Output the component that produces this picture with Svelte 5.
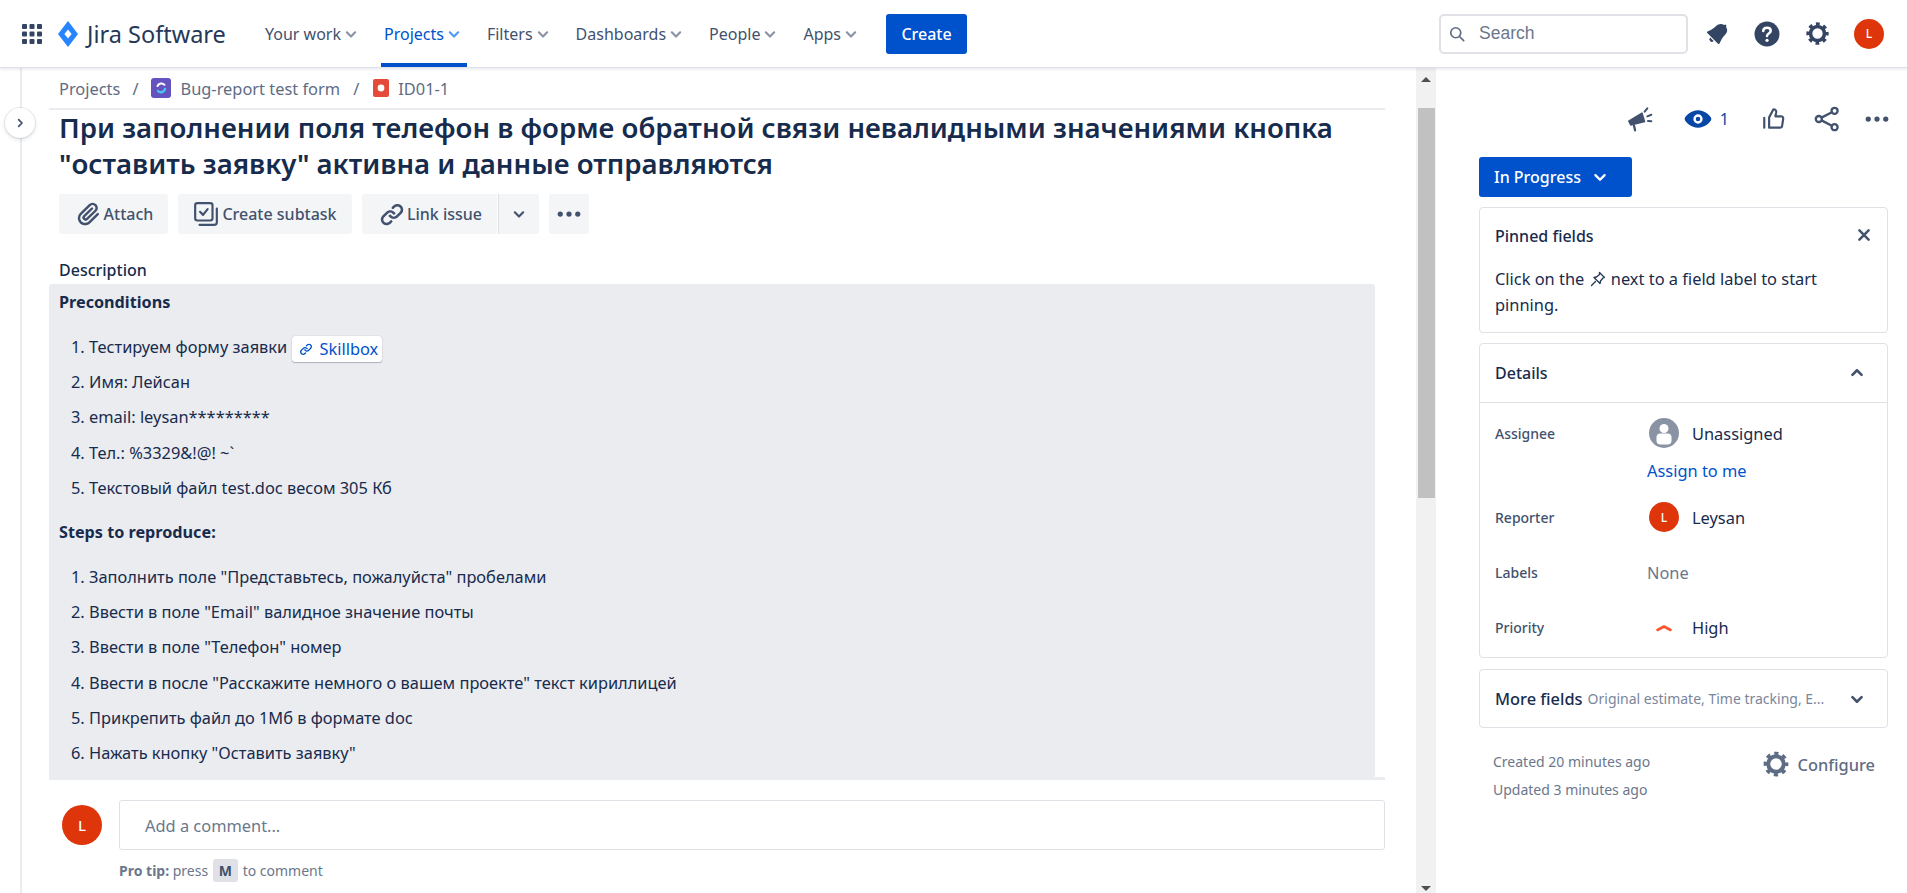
<script>
  // top navigation and description content
  const navItems = ["Your work", "Projects", "Filters", "Dashboards", "People", "Apps"];
  const preconditions = [
    "Имя: Лейсан",
    "email: leysan*********",
    "Тел.: %3329&!@! ~`",
    "Текстовый файл test.doc весом  305 Кб"
  ];
  const steps = [
    'Заполнить поле "Представьтесь, пожалуйста" пробелами',
    'Ввести в поле "Email" валидное значение почты',
    'Ввести в поле "Телефон" номер',
    'Ввести в после "Расскажите немного о вашем проекте" текст кириллицей',
    "Прикрепить файл до 1Мб в формате doc",
    'Нажать кнопку "Оставить заявку"'
  ];
</script>

{#snippet chevron(size)}
  <svg class="chev" width={size} height={size} viewBox="0 0 24 24"><path d="M7 10l5 5 5-5" fill="none" stroke="currentColor" stroke-width="2.6" stroke-linecap="round" stroke-linejoin="round" /></svg>
{/snippet}

{#snippet dots()}
  <svg width="30" height="30" viewBox="0 0 24 24" fill="currentColor"><circle cx="5" cy="12" r="2.1" /><circle cx="12" cy="12" r="2.1" /><circle cx="19" cy="12" r="2.1" /></svg>
{/snippet}

{#snippet gear(size)}
  <svg width={size} height={size} viewBox="0 0 24 24" fill="none" stroke="currentColor">
    <circle cx="12" cy="12" r="6.2" stroke-width="3.2" />
    <circle cx="12" cy="12" r="8.4" stroke-width="3" stroke-dasharray="3.3 3.3" stroke-dashoffset="1.65" />
  </svg>
{/snippet}

<div class="page">
  <header class="topbar">
    <svg class="apps" width="20" height="20" viewBox="0 0 20 20" fill="#344563">
      {#each [0, 7.5, 15] as y}
        {#each [0, 7.5, 15] as x}
          <rect x={x} y={y} width="5" height="5" rx="1" />
        {/each}
      {/each}
    </svg>
    <div class="brand">
      <svg width="20" height="26" viewBox="0 0 20 26">
        <path d="M10 0l10 13-10 13L0 13z" fill="#2684ff" />
        <path d="M10 8.5l3.6 4.5-3.6 4.5L6.4 13z" fill="#fff" />
      </svg>
      <span>Jira Software</span>
    </div>
    <nav class="nav">
      {#each navItems as item}
        <div class="nav-item" class:active={item === "Projects"}>
          {item}{@render chevron(20)}
        </div>
      {/each}
    </nav>
    <button class="create">Create</button>
    <div class="search">
      <svg width="20" height="20" viewBox="0 0 24 24" fill="none" stroke="#5e6c84" stroke-width="2"><circle cx="10.5" cy="10.5" r="6" /><path d="M15 15l5 5" stroke-linecap="round" /></svg>
      <span>Search</span>
    </div>
    <div class="top-icons">
      <svg width="30" height="30" viewBox="0 0 24 24" fill="#344563"><path d="M6.485 17.669a2 2 0 002.829 0l-2.829-2.83a2 2 0 000 2.83zm4.897-12.191l-.725.725c-.782.782-2.21 1.813-3.206 2.311l-3.017 1.509c-.495.248-.584.774-.187 1.171l8.556 8.556c.398.396.922.313 1.171-.188l1.51-3.016c.494-.988 1.526-2.42 2.311-3.206l.725-.726a5.048 5.048 0 00.64-6.356 1.01 1.01 0 10-1.354-1.494c-.023.025-.046.049-.066.075a5.043 5.043 0 00-2.788-.84 5.036 5.036 0 00-3.57 1.479z" /></svg>
      <svg width="30" height="30" viewBox="0 0 24 24"><circle cx="12" cy="12" r="10" fill="#344563" /><path d="M9 9.6c0-1.7 1.3-2.7 3-2.7s3 1 3 2.5c0 2.2-3 2.2-3 4.2" fill="none" stroke="#fff" stroke-width="2" stroke-linecap="round" /><circle cx="12" cy="17" r="1.3" fill="#fff" /></svg>
      <span class="gear-top">{@render gear(27)}</span>
      <div class="avatar small">L</div>
    </div>
  </header>

  <div class="body">
    <aside class="rail">
      <button class="rail-toggle" aria-label="Expand">
        <svg width="16" height="16" viewBox="0 0 24 24"><path d="M10 7l5 5-5 5" fill="none" stroke="#42526e" stroke-width="2.6" stroke-linecap="round" stroke-linejoin="round" /></svg>
      </button>
    </aside>

    <main class="main">
      <div class="crumbs">
        <span>Projects</span>
        <span class="slash">/</span>
        <svg class="proj-icon" width="20" height="20" viewBox="0 0 20 20">
          <rect width="20" height="20" rx="3" fill="#6554c0" />
          <path d="M6.5 8a4.2 4.2 0 0 1 7-1.2" fill="none" stroke="#fff" stroke-width="2" stroke-linecap="round" />
          <path d="M14 11a4.2 4.2 0 0 1-7 2" fill="none" stroke="#4bc5ec" stroke-width="2.4" stroke-linecap="round" />
        </svg>
        <span>Bug-report test form</span>
        <span class="slash second">/</span>
        <svg class="bug-icon" width="16" height="18" viewBox="0 0 16 18">
          <rect width="16" height="18" rx="2" fill="#e5493a" />
          <circle cx="8" cy="9" r="3.4" fill="#fff" />
        </svg>
        <span>ID01-1</span>
      </div>

      <h1 class="title">При заполнении поля телефон в форме обратной связи невалидными значениями кнопка "оставить заявку" активна и данные отправляются</h1>

      <div class="actions">
        <button class="act attach">
          <svg width="30" height="30" viewBox="0 0 24 24" fill="#42526e"><path d="M11.643 17.965c-1.53 1.495-4.016 1.496-5.542.004a3.773 3.773 0 01.002-5.412l7.147-6.985a2.316 2.316 0 013.233-.003c.893.873.895 2.282.004 3.153l-6.703 6.55a.653.653 0 01-.914-.008.62.62 0 010-.902l6.229-6.087a.941.941 0 000-1.353.995.995 0 00-1.384 0l-6.23 6.087a2.502 2.502 0 000 3.607 2.643 2.643 0 003.683.009l6.703-6.55a4.074 4.074 0 00-.004-5.859 4.306 4.306 0 00-6.002.003l-7.148 6.985a5.655 5.655 0 00-.001 8.118c2.29 2.239 6.015 2.238 8.31-.005l6.686-6.533a.941.941 0 000-1.353.995.995 0 00-1.384 0l-6.686 6.534z" /></svg>
          Attach
        </button>
        <button class="act subtask">
          <svg width="26" height="26" viewBox="0 0 24 24" fill="none" stroke="#42526e" stroke-width="2" stroke-linecap="round" stroke-linejoin="round"><rect x="2" y="2" width="16" height="16" rx="2" /><path d="M6.500 10l2.800 2.800 4.200-5.300" /><path d="M22 7v12.500a2.500 2.500 0 0 1-2.500 2.500H6" /></svg>
          Create subtask
        </button>
        <div class="split">
          <button class="act link">
            <svg width="30" height="30" viewBox="0 0 24 24" fill="#42526e"><path d="M12.856 5.457l-.937.92a1.002 1.002 0 000 1.437 1.047 1.047 0 001.463 0l.984-.966c.967-.95 2.542-1.135 3.602-.288a2.54 2.54 0 01.203 3.81l-2.903 2.852a2.646 2.646 0 01-3.696 0l-1.11-1.09L9 13.57l1.108 1.089c1.822 1.788 4.802 1.788 6.622 0l2.905-2.852a4.558 4.558 0 00-.357-6.82c-1.893-1.517-4.695-1.226-6.422.47" /><path d="M11.144 19.543l.937-.92a1.002 1.002 0 000-1.437 1.047 1.047 0 00-1.462 0l-.985.966c-.967.95-2.542 1.135-3.602.288a2.54 2.54 0 01-.203-3.81l2.903-2.852a2.646 2.646 0 013.696 0l1.11 1.09L15 11.43l-1.108-1.089c-1.822-1.788-4.802-1.788-6.622 0l-2.905 2.852a4.558 4.558 0 00.357 6.82c1.893 1.517 4.695 1.226 6.422-.47" /></svg>
            Link issue
          </button>
          <button class="act caret" aria-label="More link options">{@render chevron(20)}</button>
        </div>
        <button class="act more" aria-label="More">{@render dots()}</button>
      </div>

      <div class="desc-label">Description</div>
      <div class="desc-wrap">
        <div class="desc">
          <div class="desc-head">Preconditions</div>
          <ol>
            <li>Тестируем форму заявки <span class="smart">
              <svg width="16" height="16" viewBox="0 0 24 24" fill="#0052cc"><path d="M12.856 5.457l-.937.92a1.002 1.002 0 000 1.437 1.047 1.047 0 001.463 0l.984-.966c.967-.95 2.542-1.135 3.602-.288a2.54 2.54 0 01.203 3.81l-2.903 2.852a2.646 2.646 0 01-3.696 0l-1.11-1.09L9 13.57l1.108 1.089c1.822 1.788 4.802 1.788 6.622 0l2.905-2.852a4.558 4.558 0 00-.357-6.82c-1.893-1.517-4.695-1.226-6.422.47" /><path d="M11.144 19.543l.937-.92a1.002 1.002 0 000-1.437 1.047 1.047 0 00-1.462 0l-.985.966c-.967.95-2.542 1.135-3.602.288a2.54 2.54 0 01-.203-3.81l2.903-2.852a2.646 2.646 0 013.696 0l1.11 1.09L15 11.43l-1.108-1.089c-1.822-1.788-4.802-1.788-6.622 0l-2.905 2.852a4.558 4.558 0 00.357 6.82c1.893 1.517 4.695 1.226 6.422-.47" /></svg>
              Skillbox</span></li>
            {#each preconditions as line}
              <li>{line}</li>
            {/each}
          </ol>
          <div class="desc-head steps">Steps to reproduce:</div>
          <ol class="steps-list">
            {#each steps as line}
              <li>{line}</li>
            {/each}
          </ol>
        </div>
      </div>

      <div class="comment">
        <div class="avatar large">L</div>
        <div class="comment-box">Add a comment...</div>
      </div>
      <div class="tip"><b>Pro tip:</b> press <kbd>M</kbd> to comment</div>
    </main>

    <div class="scrollbar">
      <span class="arrow up"></span>
      <span class="thumb"></span>
      <span class="arrow down"></span>
    </div>

    <section class="side">
      <div class="side-icons">
        <svg width="32" height="32" viewBox="0 0 24 24" fill="#42526e" stroke="#42526e"><path d="M3.500 13.500L13.500 7.500l2 6.500-10.500 2.500z" stroke-width="1" stroke-linejoin="round" /><path d="M7.500 17l.8 3.500" stroke-width="1.700" stroke-linecap="round" /><path d="M15.500 6.500l2-2.500M17.500 10l3-1.200M18 13.500l2.500.2" stroke-width="1.500" stroke-linecap="round" /></svg>
        <div class="watch">
          <svg width="32" height="32" viewBox="0 0 24 24" fill="#0747a6"><path fill-rule="evenodd" d="M12 5.500c5 0 10 4.400 10 6.500s-5 6.500-10 6.500S2 14.100 2 12s5-6.500 10-6.500zm0 3a3.500 3.500 0 100 7 3.500 3.500 0 000-7zm0 1.800a1.700 1.700 0 110 3.400 1.700 1.700 0 010-3.400z" /></svg>
          <span>1</span>
        </div>
        <svg class="like" width="26" height="26" viewBox="0 0 24 24" fill="none" stroke="#42526e" stroke-width="2" stroke-linecap="round" stroke-linejoin="round"><path d="M3 11v9" /><path d="M7.500 20V10.500l4-7.500c1.700 0 2.800 1.200 2.500 3l-.7 3.500h5.200a2 2 0 0 1 2 2.300l-1 6.500a2 2 0 0 1-2 1.700z" /></svg>
        <svg class="share" width="28" height="28" viewBox="0 0 24 24" fill="none" stroke="#42526e" stroke-width="2"><circle cx="18.500" cy="5" r="2.600" /><circle cx="18.500" cy="19" r="2.600" /><circle cx="5" cy="12" r="2.600" /><path d="M7.300 10.800l8.900-4.600M7.300 13.200l8.900 4.600" /></svg>
        <span class="side-more">{@render dots()}</span>
      </div>

      <button class="status">In Progress {@render chevron(22)}</button>

      <div class="card pinned">
        <div class="pinned-head">
          <strong>Pinned fields</strong>
          <svg width="22" height="22" viewBox="0 0 24 24" fill="none" stroke="#42526e" stroke-width="2.800" stroke-linecap="round"><path d="M7 7l10 10M17 7L7 17" /></svg>
        </div>
        <p>Click on the
          <svg class="pin" width="16" height="16" viewBox="0 0 16 16" fill="none" stroke="#253858" stroke-width="1.300" stroke-linejoin="round"><path d="M9.500 1.500l5 5-1.500.5-2.500 3-.5 2.500-6-6 2.500-.5 3-2.500z" /><path d="M5.500 10.500L1.500 14.500" stroke-linecap="round" /></svg>
          next to a field label to start pinning.</p>
      </div>

      <div class="card details">
        <div class="details-head">
          <strong>Details</strong>
          <svg class="flip" width="22" height="22" viewBox="0 0 24 24"><path d="M7 10l5 5 5-5" fill="none" stroke="#42526e" stroke-width="2.800" stroke-linecap="round" stroke-linejoin="round" /></svg>
        </div>
        <div class="rows">
          <div class="row assignee">
            <span class="label">Assignee</span>
            <div class="value">
              <svg class="icon-slot" width="30" height="30" viewBox="0 0 30 30"><circle cx="15" cy="15" r="15" fill="#8993a4" /><circle cx="15" cy="10.500" r="4.500" fill="#fff" /><rect x="7.500" y="15.500" width="15" height="11" rx="4" fill="#fff" /></svg>
              <span>Unassigned</span>
            </div>
          </div>
          <a class="assign" href="#top">Assign to me</a>
          <div class="row reporter">
            <span class="label">Reporter</span>
            <div class="value">
              <div class="avatar small icon-slot">L</div>
              <span>Leysan</span>
            </div>
          </div>
          <div class="row labels">
            <span class="label">Labels</span>
            <div class="value none">None</div>
          </div>
          <div class="row priority">
            <span class="label">Priority</span>
            <div class="value">
              <svg class="icon-slot" width="30" height="30" viewBox="0 0 30 30"><path d="M8.500 17l6.500-3.500 6.500 3.500" fill="none" stroke="#ff5630" stroke-width="2.600" stroke-linecap="round" stroke-linejoin="round" /></svg>
              <span>High</span>
            </div>
          </div>
        </div>
      </div>

      <div class="card more-fields">
        <strong>More fields</strong>
        <span class="hint">Original estimate, Time tracking, E...</span>
        <svg width="22" height="22" viewBox="0 0 24 24"><path d="M7 10l5 5 5-5" fill="none" stroke="#42526e" stroke-width="2.800" stroke-linecap="round" stroke-linejoin="round" /></svg>
      </div>

      <div class="foot">
        <div class="dates">
          <div>Created 20 minutes ago</div>
          <div>Updated 3 minutes ago</div>
        </div>
        <div class="configure">{@render gear(30)} Configure</div>
      </div>
    </section>
  </div>
</div>

<style>
  :global(body) {
    margin: 0;
    background: #fff;
  }

  .page {
    width: 1907px;
    height: 893px;
    overflow: hidden;
    display: flex;
    flex-direction: column;
    font-family: "Noto Sans", "Open Sans", sans-serif;
    font-size: 15px;
    color: #172b4d;
  }

  button {
    font-family: inherit;
    border: none;
    cursor: pointer;
  }

  .topbar {
    flex: none;
    height: 68px;
    box-sizing: border-box;
    display: flex;
    align-items: center;
    padding-left: 22px;
    border-bottom: 1px solid #dfe1e6;
    box-shadow: 0 1px 3px rgba(9, 30, 66, 0.12);
    position: relative;
    z-index: 2;
    background: #fff;
  }

  .apps {
    margin-right: 16px;
  }

  .brand {
    display: flex;
    align-items: center;
    gap: 9px;
    font-size: 23.500px;
    color: #253858;
    width: 204px;
  }

  .nav {
    display: flex;
    height: 100%;
    gap: 17px;
  }

  .nav-item {
    display: flex;
    align-items: center;
    padding: 0 3px;
    font-size: 16px;
    color: #42526e;
    box-sizing: border-box;
    border-bottom: 4px solid transparent;
    border-top: 4px solid transparent;
  }

  .nav-item :global(.chev) {
    color: #8993a4;
  }

  .nav-item.active {
    color: #0052cc;
    border-bottom-color: #0052cc;
  }

  .nav-item.active :global(.chev) {
    color: #4c9aff;
  }

  .create {
    margin-left: 22px;
    width: 81px;
    height: 40px;
    border-radius: 3px;
    background: #0052cc;
    color: #fff;
    font-size: 16px;
    font-weight: 500;
  }

  .search {
    margin-left: auto;
    width: 249px;
    height: 40px;
    box-sizing: border-box;
    border: 2px solid #dfe1e6;
    border-radius: 5px;
    display: flex;
    align-items: center;
    gap: 12.500px;
    padding-left: 5.500px;
    font-family: "Liberation Sans", sans-serif;
    font-size: 17.500px;
    color: #6b778c;
  }

  .top-icons {
    display: flex;
    align-items: center;
    gap: 20px;
    margin: 0 23px 0 14px;
    color: #344563;
  }

  .gear-top {
    display: flex;
    margin: 0 1.500px;
  }

  .top-icons .avatar {
    margin-left: 2px;
  }

  .avatar {
    border-radius: 50%;
    background: #de350b;
    color: #fff;
    display: flex;
    align-items: center;
    justify-content: center;
    font-weight: 500;
    flex: none;
  }

  .avatar.small {
    width: 30px;
    height: 30px;
    font-size: 12px;
  }

  .avatar.large {
    width: 40px;
    height: 40px;
    font-size: 15px;
  }

  .body {
    flex: 1;
    min-height: 0;
    display: flex;
  }

  .rail {
    flex: none;
    width: 22px;
    box-sizing: border-box;
    border-right: 2px solid #ebecf0;
    position: relative;
  }

  .rail-toggle {
    position: absolute;
    left: 5px;
    top: 40px;
    width: 30px;
    height: 30px;
    border-radius: 50%;
    background: #fff;
    box-shadow: 0 0 0 1px rgba(9, 30, 66, 0.08), 0 2px 4px rgba(9, 30, 66, 0.12);
    display: flex;
    align-items: center;
    justify-content: center;
    padding: 0;
    z-index: 1;
  }

  .main {
    flex: none;
    width: 1394px;
    box-sizing: border-box;
    padding: 0 31px 0 27px;
    overflow: hidden;
  }

  .crumbs {
    height: 40px;
    display: flex;
    align-items: center;
    padding-left: 10px;
    font-size: 16.400px;
    color: #5e6c84;
    border-bottom: 2px solid #ebecf0;
  }

  .slash {
    margin: 0 12px;
  }

  .slash.second {
    margin: 0 14px 0 13px;
  }

  .proj-icon {
    margin-right: 10px;
  }

  .bug-icon {
    margin-right: 9px;
  }

  .title {
    margin: -1px 0 0 10px;
    font-size: 27.600px;
    line-height: 36px;
    font-weight: 600;
    color: #172b4d;
  }

  .actions {
    display: flex;
    gap: 10px;
    margin: 13px 0 0 10px;
  }

  .act {
    height: 40px;
    display: flex;
    align-items: center;
    justify-content: center;
    gap: 4px;
    background: #f4f5f7;
    border-radius: 3px;
    font-size: 16px;
    font-weight: 500;
    color: #42526e;
    padding: 0;
  }

  .attach {
    width: 109px;
    gap: 0;
  }

  .subtask {
    width: 174px;
    gap: 3px;
  }

  .split {
    display: flex;
    gap: 1px;
  }

  .link {
    width: 135px;
    gap: 0;
    border-radius: 3px 0 0 3px;
  }

  .caret {
    width: 41px;
    border-radius: 0 3px 3px 0;
    border-left: 1px solid #dfe1e6;
  }

  .more {
    width: 40px;
  }

  .desc-label {
    margin: 25px 0 0 10px;
    height: 25px;
    line-height: 22px;
    font-size: 16px;
    font-weight: 500;
  }

  .desc-wrap {
    border-bottom: 3px solid #ebecf0;
  }

  .desc {
    background: #ebecf0;
    border-radius: 3px 3px 0 0;
    width: 1326px;
    height: 493px;
    box-sizing: border-box;
    padding: 7px 10px;
    overflow: hidden;
  }

  .desc-head {
    font-weight: 700;
    font-size: 16.200px;
    line-height: 22px;
  }

  .desc-head.steps {
    margin-top: 16px;
  }

  ol {
    margin: 16px 0 0;
    padding: 0 0 0 30px;
    font-size: 16.400px;
  }

  ol.steps-list {
    margin-top: 16px;
  }

  li {
    height: 35.200px;
    line-height: 35px;
  }

  .smart {
    display: inline-flex;
    align-items: center;
    gap: 6px;
    height: 26px;
    line-height: 26px;
    padding: 0 4px 0 6px;
    background: #fff;
    border-radius: 3px;
    box-shadow: 0 1px 1px rgba(9, 30, 66, 0.25), 0 0 1px rgba(9, 30, 66, 0.31);
    color: #0052cc;
    vertical-align: middle;
  }

  .comment {
    display: flex;
    align-items: center;
    gap: 17px;
    margin: 20px 0 0 13px;
  }

  .comment-box {
    flex: 1;
    height: 50px;
    box-sizing: border-box;
    border: 1px solid #dfe1e6;
    border-radius: 3px;
    padding-left: 25px;
    display: flex;
    align-items: center;
    font-size: 16.400px;
    color: #6b778c;
  }

  .tip {
    margin: 11px 0 0 70px;
    font-size: 14px;
    color: #6b778c;
  }

  kbd {
    font-family: inherit;
    font-weight: 700;
    background: #dfe1e6;
    color: #42526e;
    border-radius: 3px;
    padding: 2px 6px;
    margin: 0 1px;
  }

  .scrollbar {
    flex: none;
    width: 20px;
    background: #f1f1f1;
    display: flex;
    flex-direction: column;
    align-items: center;
    position: relative;
  }

  .thumb {
    width: 17px;
    height: 390px;
    background: #c1c1c1;
    margin-top: 19px;
  }

  .arrow {
    width: 0;
    height: 0;
    border-left: 5px solid transparent;
    border-right: 5px solid transparent;
  }

  .arrow.up {
    border-bottom: 5px solid #505050;
    margin-top: 9px;
    margin-bottom: 7px;
  }

  .arrow.down {
    border-top: 5px solid #505050;
    margin-top: auto;
    margin-bottom: 2px;
  }

  .side {
    flex: none;
    width: 471px;
    box-sizing: border-box;
    padding: 0 19px 0 43px;
    font-size: 16.400px;
  }

  .side-icons {
    height: 89px;
    box-sizing: border-box;
    padding-top: 12px;
    display: flex;
    align-items: center;
    justify-content: flex-end;
    color: #42526e;
  }

  .watch {
    display: flex;
    align-items: center;
    gap: 6px;
    margin-left: 26px;
    color: #0747a6;
    font-size: 16px;
  }

  .like {
    margin-left: 32px;
  }

  .share {
    margin-left: 26px;
  }

  .side-more {
    display: flex;
    margin-left: 21px;
    margin-right: -4px;
  }

  .status {
    width: 153px;
    height: 40px;
    border-radius: 3px;
    background: #0052cc;
    color: #fff;
    font-size: 16px;
    font-weight: 500;
    display: flex;
    align-items: center;
    gap: 8px;
    padding: 0 0 0 15px;
  }

  .card {
    border: 1px solid #dfe1e6;
    border-radius: 4px;
    box-sizing: border-box;
    margin-top: 10px;
  }

  strong {
    font-weight: 500;
  }

  .pinned {
    height: 126px;
    padding: 0 15px;
  }

  .pinned-head {
    display: flex;
    justify-content: space-between;
    align-items: center;
    height: 58px;
    box-sizing: border-box;
    padding-bottom: 3px;
    font-size: 16px;
  }

  .pinned-head svg {
    margin-right: -3px;
    margin-top: -2px;
  }

  .pinned p {
    margin: 0;
    line-height: 26px;
    color: #172b4d;
  }

  .pin {
    vertical-align: -2px;
    margin: 0 1px;
  }

  .details {
    height: 315px;
  }

  .details-head {
    height: 59px;
    display: flex;
    justify-content: space-between;
    align-items: center;
    padding: 0 15px;
    border-bottom: 1px solid #dfe1e6;
    box-sizing: border-box;
    font-size: 16px;
  }

  .details-head svg {
    margin-right: 4px;
  }

  .flip {
    transform: rotate(180deg);
  }

  .row {
    display: flex;
    align-items: center;
    padding-left: 15px;
    height: 30px;
  }

  .row.assignee {
    margin-top: 15px;
  }

  .row.reporter {
    margin-top: 20px;
  }

  .row.labels {
    margin-top: 25.500px;
  }

  .row.priority {
    margin-top: 25px;
  }

  .label {
    width: 152px;
    font-size: 14px;
    color: #42526e;
    font-weight: 500;
  }

  .value {
    display: flex;
    align-items: center;
    gap: 13px;
  }

  .icon-slot {
    margin-left: 2px;
  }

  .none {
    color: #6b778c;
  }

  .assign {
    display: block;
    margin: 12px 0 0 167px;
    line-height: 22px;
    color: #0052cc;
    text-decoration: none;
  }

  .more-fields {
    height: 59px;
    margin-top: 11px;
    display: flex;
    align-items: center;
    padding: 0 15px;
    gap: 5px;
  }

  .hint {
    font-size: 14px;
    color: #7a869a;
    flex: 1;
    white-space: nowrap;
    overflow: hidden;
  }

  .more-fields svg {
    margin-right: 4px;
  }

  .foot {
    display: flex;
    justify-content: space-between;
    padding: 20px 13px 0 14px;
  }

  .dates {
    font-size: 14px;
    line-height: 28px;
    color: #6b778c;
  }

  .configure {
    display: flex;
    align-items: center;
    gap: 7px;
    height: 32px;
    font-weight: 500;
    color: #5e6c84;
  }
</style>
